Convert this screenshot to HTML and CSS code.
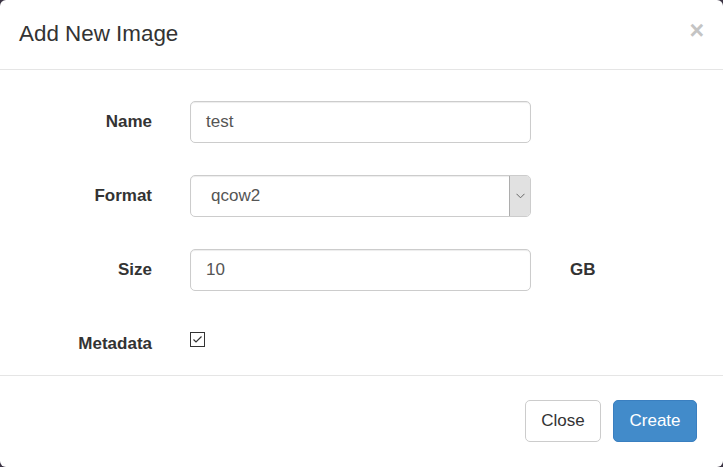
FILE: index.html
```html
<!DOCTYPE html>
<html>
<head>
<meta charset="utf-8">
<link rel="stylesheet" href="styles.css">
</head>
<body>
<div class="modal">
  <div class="modal-header">
    <h4 class="modal-title">Add New Image</h4>
    <span class="close">&times;</span>
  </div>
  <div class="modal-body">
    <div class="form-row">
      <label class="form-label">Name</label>
      <div class="form-control">test</div>
      <span></span>
    </div>
    <div class="form-row">
      <label class="form-label">Format</label>
      <div class="form-control select">
        <span class="select-value">qcow2</span>
        <span class="select-arrow">
          <svg width="9" height="6" viewBox="0 0 9 6"><path d="M0.5 0.8 L4.5 4.8 L8.5 0.8" fill="none" stroke="#666" stroke-width="1"/></svg>
        </span>
      </div>
      <span></span>
    </div>
    <div class="form-row">
      <label class="form-label">Size</label>
      <div class="form-control">10</div>
      <span class="unit">GB</span>
    </div>
    <div class="form-row">
      <label class="form-label">Metadata</label>
      <div class="check-wrap">
        <svg class="checkbox" width="15" height="15" viewBox="0 0 15 15">
          <rect x="0.5" y="0.5" width="14" height="14" fill="#fff" stroke="#333" stroke-width="1"/>
          <path d="M3.5 7.5 L6 10 L11.5 4.5" fill="none" stroke="#333" stroke-width="1.2"/>
        </svg>
      </div>
      <span></span>
    </div>
  </div>
  <div class="modal-footer">
    <button class="btn btn-default">Close</button>
    <button class="btn btn-primary">Create</button>
  </div>
</div>
</body>
</html>
```
FILE: styles.css
```css
html, body {
  margin: 0;
  padding: 0;
}
body {
  background: #3b3444;
  font-family: "Liberation Sans", Arial, sans-serif;
  color: #333;
  width: 723px;
  height: 467px;
  overflow: hidden;
}
.modal {
  width: 723px;
  height: 467px;
  background: #fff;
  border-radius: 6px;
  display: flex;
  flex-direction: column;
  box-sizing: border-box;
}
.modal-header {
  height: 70px;
  box-sizing: border-box;
  border-bottom: 1px solid #e5e5e5;
  padding: 0 19px 0 19px;
  display: flex;
  align-items: center;
  justify-content: space-between;
}
.modal-title {
  margin: 0;
  font-size: 22.4px;
  font-weight: 400;
  color: #333;
  line-height: 1.1;
}
.close {
  font-size: 25px;
  font-weight: bold;
  color: #c4c4c4;
  line-height: 1;
  margin-right: 0;
  margin-top: -8px;
}
.modal-body {
  height: 305px;
  box-sizing: border-box;
  padding-top: 31px;
}
.form-row {
  display: grid;
  grid-template-columns: 152px 341px auto;
  column-gap: 38px;
  height: 42px;
  margin-bottom: 32px;
  align-items: center;
}
.form-label {
  text-align: right;
  font-weight: bold;
  font-size: 17px;
  color: #333;
}
.form-control {
  height: 42px;
  box-sizing: border-box;
  border: 1px solid #ccc;
  border-radius: 5px;
  box-shadow: inset 0 1px 1px rgba(0,0,0,0.075);
  padding: 0 15px;
  display: flex;
  align-items: center;
  font-size: 17px;
  color: #555;
}
.select {
  padding: 0 0 0 20px;
  justify-content: space-between;
  overflow: hidden;
}
.select-arrow {
  width: 20px;
  height: 40px;
  background: #e1e1e1;
  border-left: 1px solid #adadad;
  display: flex;
  align-items: center;
  justify-content: center;
}
.unit {
  font-weight: bold;
  font-size: 17px;
  color: #333;
  margin-left: 1px;
}
.check-wrap {
  align-self: start;
  padding-top: 9px;
}
.checkbox {
  display: block;
}
.modal-footer {
  flex: 1;
  border-top: 1px solid #e5e5e5;
  display: flex;
  justify-content: flex-end;
  align-items: flex-start;
  gap: 12px;
  padding: 24px 26px 0 0;
}
.btn {
  height: 42px;
  box-sizing: border-box;
  border-radius: 5px;
  font-family: "Liberation Sans", Arial, sans-serif;
  font-size: 17px;
  padding: 0 15px;
  border: 1px solid #ccc;
}
.btn-default {
  background: #fff;
  color: #333;
  width: 76px;
}
.btn-primary {
  background: #428bca;
  border-color: #3a7fc0;
  color: #fff;
  width: 84px;
}
```
